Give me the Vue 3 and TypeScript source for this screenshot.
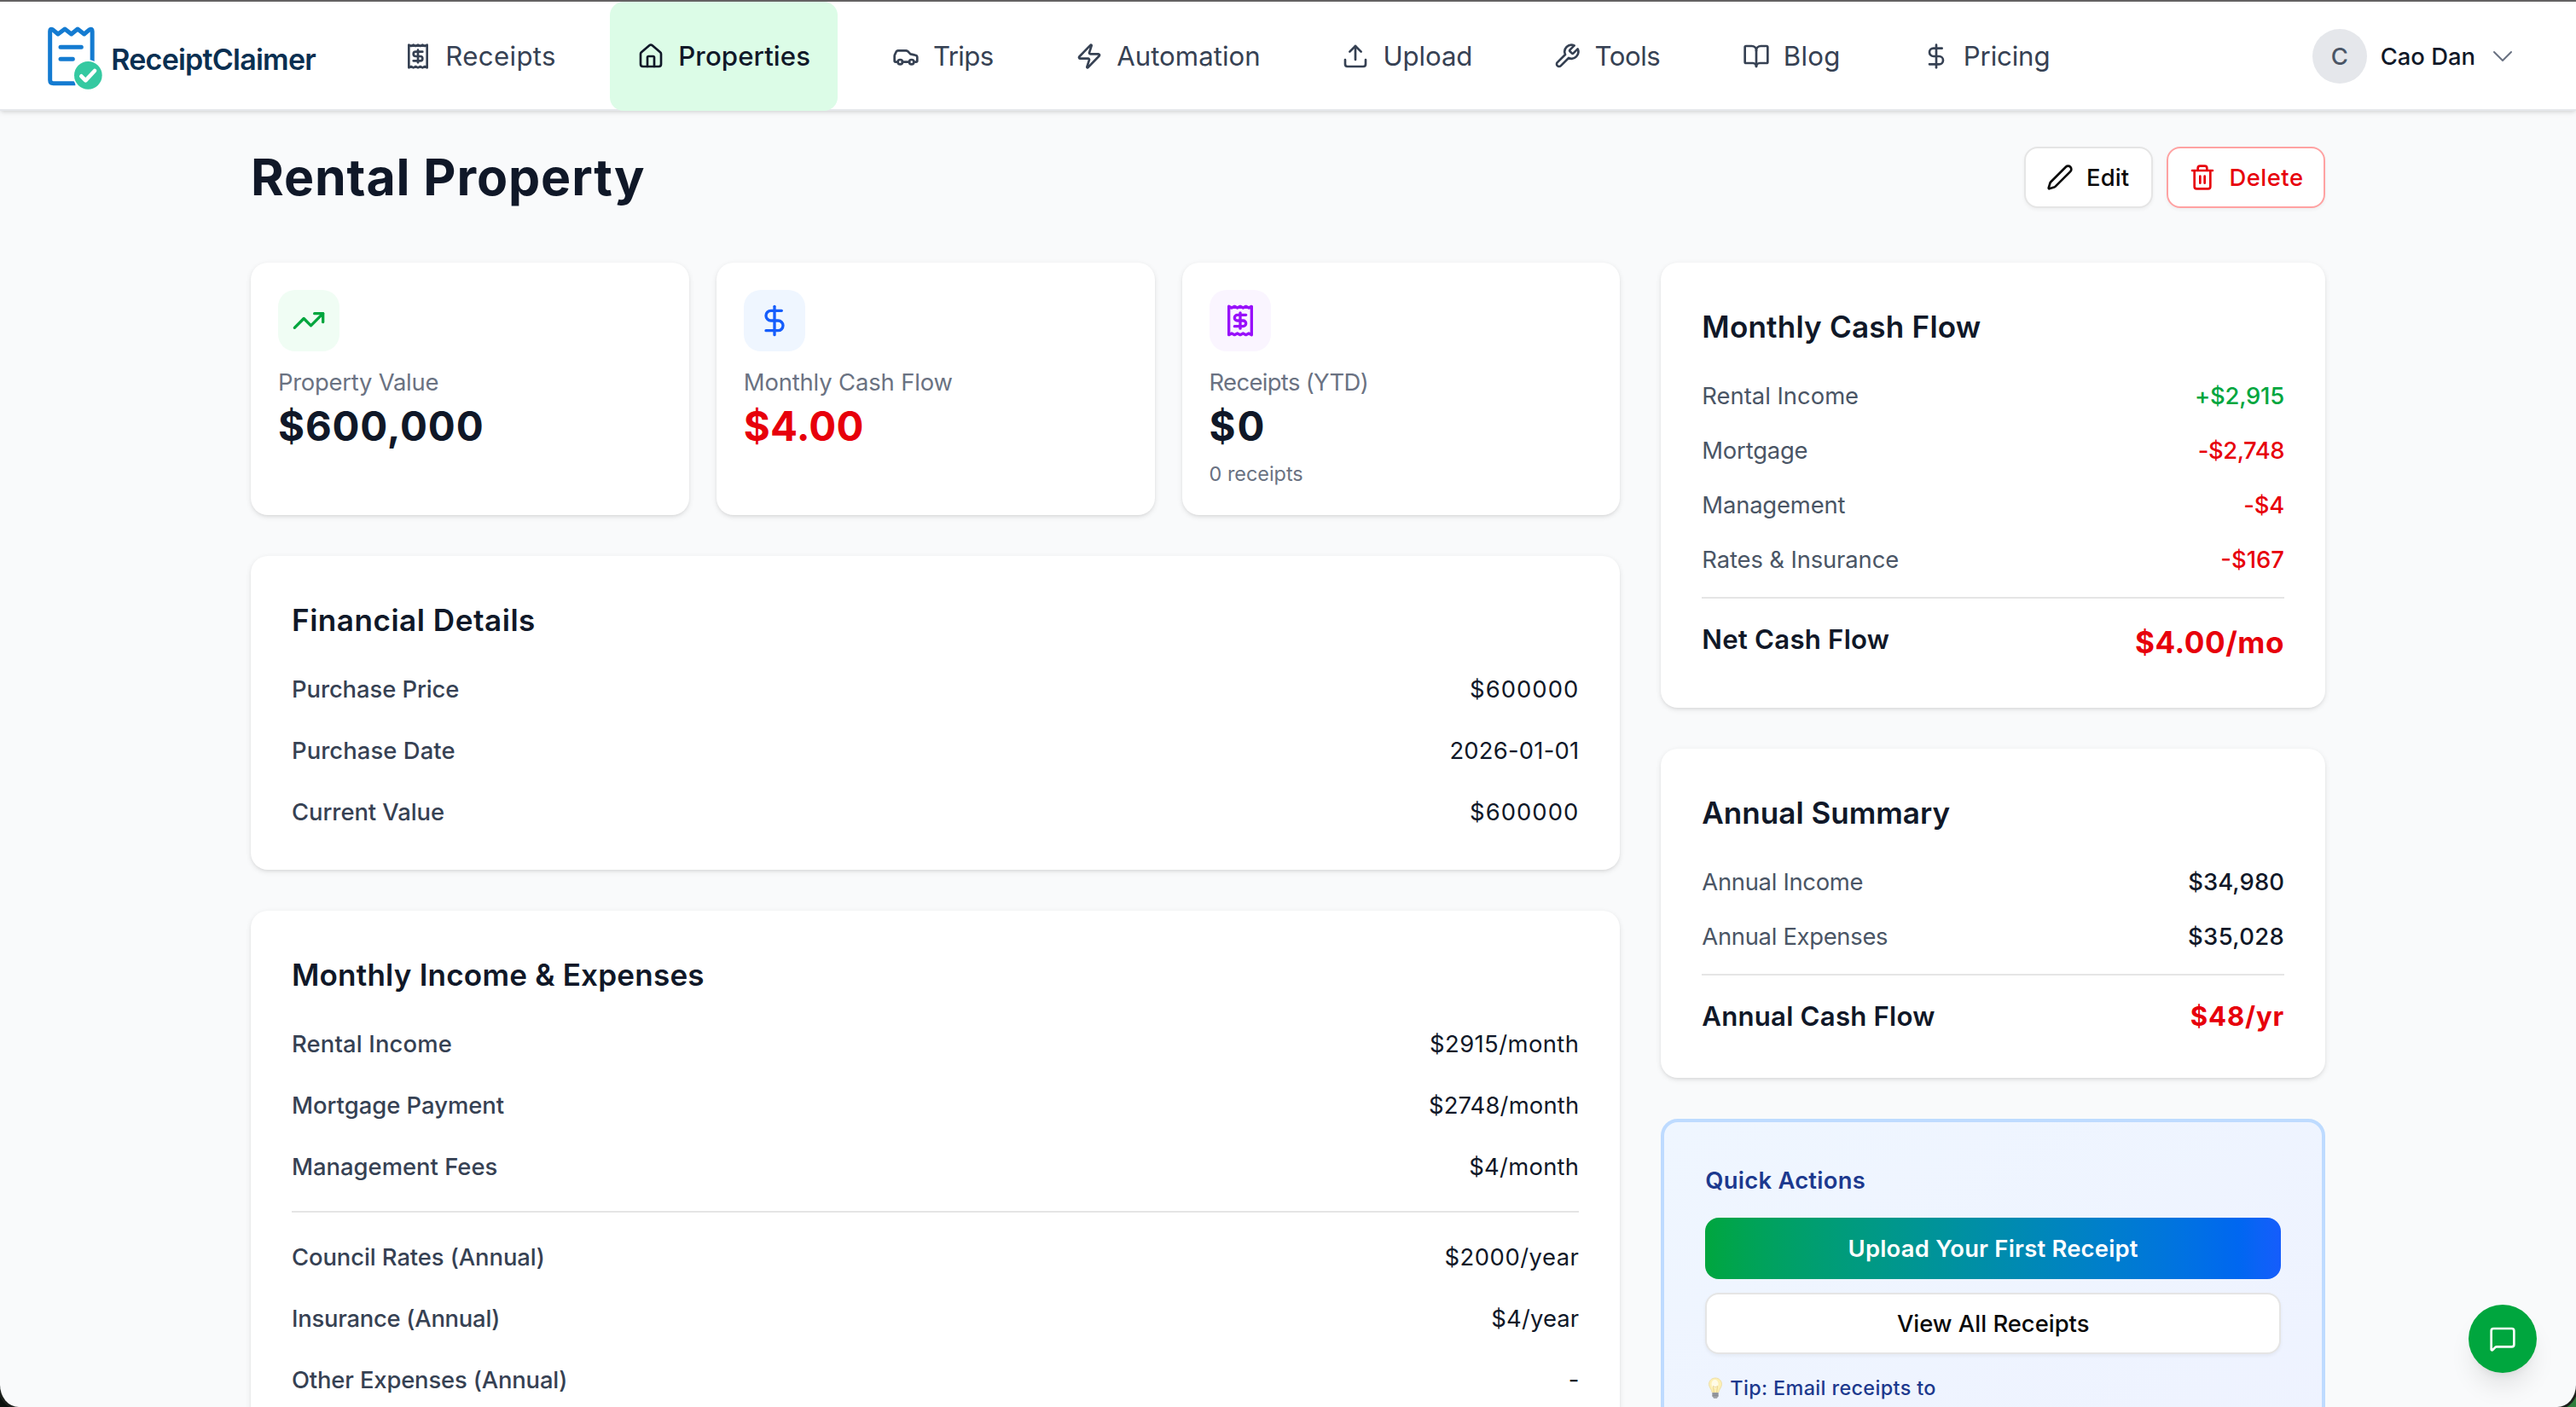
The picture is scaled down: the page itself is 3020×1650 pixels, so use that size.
<script setup lang="ts">
interface Txt { text: string; ls?: number }
interface Row { label: Txt; value: Txt; tone?: 'pos' | 'neg' }

const icons = {
  receipt: ['M4 2v20l2-1 2 1 2-1 2 1 2-1 2 1 2-1 2 1V2l-2 1-2-1-2 1-2-1-2 1-2-1-2 1Z', 'M16 8h-6a2 2 0 1 0 0 4h4a2 2 0 1 1 0 4H8', 'M12 17.5v-11'],
  house: ['M15 21v-8a1 1 0 0 0-1-1h-4a1 1 0 0 0-1 1v8', 'M3 10a2 2 0 0 1 .709-1.528l7-5.999a2 2 0 0 1 2.582 0l7 5.999A2 2 0 0 1 21 10v9a2 2 0 0 1-2 2H5a2 2 0 0 1-2-2z'],
  car: ['M19 17h2c.6 0 1-.4 1-1v-3c0-.9-.7-1.7-1.5-1.9C18.7 10.6 16 10 16 10s-1.3-1.4-2.2-2.3c-.5-.4-1.1-.7-1.8-.7H5c-.6 0-1.1.4-1.4.9l-1.4 2.9A3.7 3.7 0 0 0 2 12v4c0 .6.4 1 1 1h2', 'M9 17a2 2 0 1 1-4 0 2 2 0 0 1 4 0z', 'M9 17h6', 'M19 17a2 2 0 1 1-4 0 2 2 0 0 1 4 0z'],
  zap: ['M4 14a1 1 0 0 1-.78-1.63l9.9-10.2a.5.5 0 0 1 .86.46l-1.92 6.02A1 1 0 0 0 13 10h7a1 1 0 0 1 .78 1.63l-9.9 10.2a.5.5 0 0 1-.86-.46l1.92-6.02A1 1 0 0 0 11 14z'],
  upload: ['M12 3v12', 'm17 8-5-5-5 5', 'M21 15v4a2 2 0 0 1-2 2H5a2 2 0 0 1-2-2v-4'],
  wrench: ['M14.7 6.3a1 1 0 0 0 0 1.4l1.6 1.6a1 1 0 0 0 1.4 0l3.77-3.77a6 6 0 0 1-7.94 7.94l-6.91 6.91a2.12 2.12 0 0 1-3-3l6.91-6.91a6 6 0 0 1 7.94-7.94l-3.76 3.76z'],
  book: ['M12 7v14', 'M3 18a1 1 0 0 1-1-1V4a1 1 0 0 1 1-1h5a4 4 0 0 1 4 4 4 4 0 0 1 4-4h5a1 1 0 0 1 1 1v13a1 1 0 0 1-1 1h-6a3 3 0 0 0-3 3 3 3 0 0 0-3-3z'],
  dollar: ['M12 2v20', 'M17 5H9.5a3.5 3.5 0 0 0 0 7h5a3.5 3.5 0 0 1 0 7H6'],
  trend: ['M16 7h6v6', 'm22 7-8.5 8.5-5-5L2 17'],
}
type IconName = keyof typeof icons

const nav: { icon: IconName; text: string; width: number; ls: number; active?: boolean }[] = [
  { icon: 'receipt', text: 'Receipts', width: 129, ls: 0.35 },
  { icon: 'house', text: 'Properties', width: 154.6, ls: 0.06, active: true },
  { icon: 'car', text: 'Trips', width: 71.3, ls: -0.59 },
  { icon: 'zap', text: 'Automation', width: 168.3, ls: 0.02 },
  { icon: 'upload', text: 'Upload', width: 104, ls: -0.1 },
  { icon: 'wrench', text: 'Tools', width: 77.3, ls: -0.46 },
  { icon: 'book', text: 'Blog', width: 67, ls: 0.3 },
  { icon: 'dollar', text: 'Pricing', width: 101, ls: -0.15 },
]

const stats: { icon: IconName; color: string; label: Txt; value: Txt; sub?: Txt; red?: boolean }[] = [
  { icon: 'trend', color: 'green', label: { text: 'Property Value', ls: -0.24 }, value: { text: '$600,000', ls: 0.85 } },
  { icon: 'dollar', color: 'blue', label: { text: 'Monthly Cash Flow', ls: -0.13 }, value: { text: '$4.00', ls: 0.2 }, red: true },
  { icon: 'receipt', color: 'purple', label: { text: 'Receipts (YTD)', ls: -0.65 }, value: { text: '$0', ls: 1.8 }, sub: { text: '0 receipts' } },
]

const row = (l: string, lls: number, v: string, vls: number, tone?: 'pos' | 'neg'): Row => ({ label: { text: l, ls: lls }, value: { text: v, ls: vls }, tone })

const financial = [
  row('Purchase Price', -0.08, '$600000', 1.05),
  row('Purchase Date', 0.08, '2026-01-01', 0.22),
  row('Current Value', -0.05, '$600000', 1.05),
]
const monthly = [
  row('Rental Income', 0.16, '$2915/month', 0.42),
  row('Mortgage Payment', 0, '$2748/month', 0.18),
  row('Management Fees', 0, '$4/month', 0.28),
]
const annualCosts = [
  row('Council Rates (Annual)', -0.08, '$2000/year', 0.5),
  row('Insurance (Annual)', -0.25, '$4/year', 0.15),
  row('Other Expenses (Annual)', -0.15, '-', 0),
]
const cashFlow = [
  row('Rental Income', 0, '+$2,915', -0.2, 'pos'),
  row('Mortgage', -0.2, '-$2,748', -0.45, 'neg'),
  row('Management', -0.16, '-$4', -0.2, 'neg'),
  row('Rates & Insurance', -0.12, '-$167', 0, 'neg'),
]
const annual = [
  row('Annual Income', -0.3, '$34,980', 0.1),
  row('Annual Expenses', -0.3, '$35,028', 0.35),
]
const sp = (t: Txt) => ({ letterSpacing: (t.ls ?? 0) + 'px' })
</script>

<template>
  <div class="screen">
    <div class="page">
      <header class="topbar">
        <div class="brand">
          <svg class="brand-mark" viewBox="76 60 198 228" fill="none">
            <path d="M176 263H99Q87 263 87 251V80Q87 69 96 74L115 90 139 72 162 90 184 72 207 90 226 74Q235.500 69 235.500 80V200" stroke="#147bd1" stroke-width="15" stroke-linejoin="round" />
            <path d="M124 136H197M124 178H167" stroke="#147bd1" stroke-width="15" stroke-linecap="round" />
            <circle cx="221" cy="235" r="54" fill="#fff" />
            <circle cx="221" cy="235" r="49" fill="#35c9a1" />
            <path d="M197 238 212 253 244 219" stroke="#fff" stroke-width="14" stroke-linecap="round" stroke-linejoin="round" />
          </svg>
          <span class="brand-name">ReceiptClaimer</span>
        </div>
        <nav class="nav">
          <a v-for="n in nav" :key="n.text" class="nav-item" :class="{ active: n.active }">
            <svg class="icon" viewBox="0 0 24 24"><path v-for="d in icons[n.icon]" :key="d" :d="d" /></svg>
            <span class="nav-text" :style="{ width: n.width + 'px', letterSpacing: n.ls + 'px' }">{{ n.text }}</span>
          </a>
        </nav>
        <div class="user">
          <span class="avatar">C</span>
          <span class="user-name">Cao Dan</span>
          <svg class="icon chevron" viewBox="0 0 24 24"><path d="m19.500 8.250-7.500 7.500-7.500-7.500" /></svg>
        </div>
      </header>

      <main class="main">
        <div class="heading">
          <h1>Rental Property</h1>
          <div class="actions">
            <button class="btn edit">
              <svg class="icon" viewBox="0 0 24 24"><path d="M21.174 6.812a1 1 0 0 0-3.986-3.987L3.842 16.174a2 2 0 0 0-.5.83l-1.321 4.352a.5.5 0 0 0 .623.622l4.353-1.320a2 2 0 0 0 .83-.497z" /></svg>
              <span>Edit</span>
            </button>
            <button class="btn delete">
              <svg class="icon" viewBox="0 0 24 24"><path d="M10 11v6M14 11v6M19 6v14a2 2 0 0 1-2 2H7a2 2 0 0 1-2-2V6M3 6h18M8 6V4a2 2 0 0 1 2-2h4a2 2 0 0 1 2 2v2" /></svg>
              <span>Delete</span>
            </button>
          </div>
        </div>

        <div class="columns">
          <div class="left">
            <div class="stats">
              <section v-for="s in stats" :key="s.label.text" class="card stat">
                <div class="tile" :class="s.color">
                  <svg class="icon" viewBox="0 0 24 24"><path v-for="d in icons[s.icon]" :key="d" :d="d" /></svg>
                </div>
                <div class="stat-label" :style="sp(s.label)">{{ s.label.text }}</div>
                <div class="stat-value" :class="{ neg: s.red }" :style="sp(s.value)">{{ s.value.text }}</div>
                <div v-if="s.sub" class="stat-sub">{{ s.sub.text }}</div>
              </section>
            </div>

            <section class="card panel">
              <h2 class="loose">Financial Details</h2>
              <div class="rows wide">
                <div v-for="r in financial" :key="r.label.text" class="row">
                  <span :style="sp(r.label)">{{ r.label.text }}</span>
                  <span class="val" :style="sp(r.value)">{{ r.value.text }}</span>
                </div>
              </div>
            </section>

            <section class="card panel">
              <h2>Monthly Income &amp; Expenses</h2>
              <div class="rows wide">
                <div v-for="r in monthly" :key="r.label.text" class="row">
                  <span :style="sp(r.label)">{{ r.label.text }}</span>
                  <span class="val" :style="sp(r.value)">{{ r.value.text }}</span>
                </div>
                <div class="rows wide split">
                  <div v-for="r in annualCosts" :key="r.label.text" class="row">
                    <span :style="sp(r.label)">{{ r.label.text }}</span>
                    <span class="val" :style="sp(r.value)">{{ r.value.text }}</span>
                  </div>
                </div>
              </div>
            </section>
          </div>

          <aside class="right">
            <section class="card panel">
              <h2>Monthly Cash Flow</h2>
              <div class="rows tight">
                <div v-for="r in cashFlow" :key="r.label.text" class="row">
                  <span :style="sp(r.label)">{{ r.label.text }}</span>
                  <span class="val" :class="r.tone" :style="sp(r.value)">{{ r.value.text }}</span>
                </div>
                <div class="total">
                  <span class="total-label">Net Cash Flow</span>
                  <span class="total-value big">$4.00/mo</span>
                </div>
              </div>
            </section>

            <section class="card panel">
              <h2 class="snug">Annual Summary</h2>
              <div class="rows tight">
                <div v-for="r in annual" :key="r.label.text" class="row">
                  <span :style="sp(r.label)">{{ r.label.text }}</span>
                  <span class="val" :style="sp(r.value)">{{ r.value.text }}</span>
                </div>
                <div class="total">
                  <span class="total-label">Annual Cash Flow</span>
                  <span class="total-value">$48/yr</span>
                </div>
              </div>
            </section>

            <section class="quick">
              <h3>Quick Actions</h3>
              <button class="cta">Upload Your First Receipt</button>
              <button class="btn secondary">View All Receipts</button>
              <p class="tip">
                <svg class="bulb" viewBox="0 0 18 26">
                  <path d="M9 1C4.500 1 1.500 4.300 1.500 8.300c0 3.700 3 5.600 3.800 9.700h7.400c.8-4.100 3.800-6 3.800-9.700C16.500 4.300 13.500 1 9 1z" fill="#fdf0b4" stroke="#ead9a0" stroke-width=".8" />
                  <ellipse cx="8.500" cy="8" rx="4" ry="5" fill="#fffbe6" />
                  <path d="M7.300 18 6.500 10.500 9 12l2.500-1.500L10.700 18" fill="none" stroke="#e3c878" stroke-width=".7" />
                  <path d="M5.400 18h7.200v4.500L10.800 25H7.200l-1.800-2.500z" fill="#a3a6ab" />
                  <path d="M5.400 19.800h7.200M5.400 21.800h7.200" stroke="#74787f" stroke-width=".8" />
                </svg>
                <span>Tip: Email receipts to</span>
              </p>
            </section>
          </aside>
        </div>
      </main>

      <button class="chat">
        <svg class="icon" viewBox="0 0 24 24"><path d="M22 17a2 2 0 0 1-2 2H6.828a2 2 0 0 0-1.414.586l-2.202 2.202A.71.71 0 0 1 2 21.286V5a2 2 0 0 1 2-2h16a2 2 0 0 1 2 2z" /></svg>
      </button>
    </div>
  </div>
</template>

<style>
body { background: #16241a; }
</style>

<style scoped>
* { box-sizing: border-box; margin: 0; }
.screen {
  width: 3020px;
  height: 1650px;
  overflow: hidden;
  background: linear-gradient(to right, #0c120e 50%, #2f7d3c 50%);
  font-family: Inter, "Liberation Sans", sans-serif;
  color: #101828;
}
.page {
  position: relative;
  height: 1650px;
  overflow: hidden;
  background: #f9fafb;
  border-top: 2px solid #646263;
  border-radius: 0 0 22px 22px / 0 0 26px 26px;
  box-shadow: 0 0 0 3px #1b1f1b;
}
.icon {
  width: 32px;
  height: 32px;
  flex: none;
  fill: none;
  stroke: currentColor;
  stroke-width: 2;
  stroke-linecap: round;
  stroke-linejoin: round;
}
button { font-family: inherit; }

.topbar {
  display: flex;
  align-items: flex-start;
  height: 128px;
  padding: 0 70px 0 55.3px;
  background: #fff;
  border-bottom: 2px solid #e5e7eb;
  box-shadow: 0 2px 6px rgba(0, 0, 0, .1), 0 2px 4px -2px rgba(0, 0, 0, .1);
}
.brand { display: flex; align-items: center; width: 387px; padding-top: 28px; }
.brand-mark { width: 66px; height: 76px; }
.brand-name {
  padding: 3px 0 0 9px;
  font-size: 34px;
  font-weight: 600;
  line-height: 40px;
  letter-spacing: -.77px;
  color: #0a2f51;
}
.nav { display: flex; gap: 32px; }
.nav-item {
  display: flex;
  align-items: center;
  gap: 16px;
  height: 128px;
  padding: 0 32px;
  border-radius: 16px;
  color: #364153;
  font-size: 31.2px;
}
.nav-text { white-space: nowrap; }
.nav-item.active { background: #dcfce7; color: #101828; font-weight: 500; }
.user {
  display: flex;
  align-items: center;
  gap: 16px;
  height: 128px;
  margin-left: auto;
  font-size: 27.4px;
  font-weight: 500;
}
.avatar {
  display: flex;
  align-items: center;
  justify-content: center;
  width: 64px;
  height: 64px;
  border-radius: 50%;
  background: #e5e7eb;
  color: #4a5565;
}
.chevron { stroke-width: 1.5; color: #6a7282; }

.main { width: 2432px; margin: 0 auto; padding-top: 42px; }
.heading { display: flex; justify-content: space-between; height: 72px; }
h1 { font-size: 59px; font-weight: 700; line-height: 72px; letter-spacing: .9px; }
.actions { display: flex; gap: 16px; }
.btn {
  display: flex;
  align-items: center;
  gap: 16px;
  height: 72px;
  padding: 0 24px;
  border: 2px solid #e5e5e5;
  border-radius: 16px;
  background: #fff;
  color: #0a0a0a;
  font-size: 27.4px;
  font-weight: 500;
  box-shadow: 0 2px 4px rgba(0, 0, 0, .05);
}
.edit { width: 151px; gap: 15px; letter-spacing: .15px; }
.delete { width: 186px; gap: 15.5px; border-color: #ffa2a2; color: #e7000b; letter-spacing: .5px; }

.columns { display: grid; grid-template-columns: repeat(3, 1fr); gap: 48px; margin-top: 64px; }
.left { grid-column: span 2; display: flex; flex-direction: column; gap: 48px; }
.right { display: flex; flex-direction: column; gap: 48px; }
.stats { display: grid; grid-template-columns: repeat(3, 1fr); gap: 32px; }
.card {
  background: #fff;
  border-radius: 20px;
  box-shadow: 0 2px 6px rgba(0, 0, 0, .1), 0 2px 4px -2px rgba(0, 0, 0, .1);
}
.stat { height: 296px; padding: 32px; }
.tile {
  display: flex;
  align-items: center;
  justify-content: center;
  width: 72px;
  height: 72px;
  margin-bottom: 16px;
  border-radius: 20px;
}
.tile .icon { width: 40px; height: 40px; }
.tile.green { background: #f0fdf4; color: #00a63e; }
.tile.blue { background: #eff6ff; color: #155dfc; }
.tile.purple { background: #faf5ff; color: #9810fa; }
.stat-label { font-size: 27.4px; line-height: 40px; color: #6a7282; }
.stat-value { font-size: 47.4px; font-weight: 700; line-height: 64px; }
.stat-sub { margin-top: 8px; font-size: 23.4px; line-height: 32px; color: #6a7282; }
.panel { padding: 48px; }
h2 { font-size: 35.1px; font-weight: 600; line-height: 54px; margin-bottom: 34px; letter-spacing: .2px; }
h2.loose { letter-spacing: .52px; }
h2.snug { letter-spacing: 0; }
.rows { display: flex; flex-direction: column; }
.wide { gap: 32px; }
.tight { gap: 24px; }
.row { display: flex; justify-content: space-between; font-size: 27.4px; line-height: 40px; white-space: nowrap; }
.wide .row { font-weight: 450; color: #364153; }
.wide .val { font-weight: 400; color: #101828; }
.tight .row { color: #4a5565; }
.tight .val { font-weight: 500; color: #101828; }
.split { padding-top: 32px; border-top: 2px solid #e5e5e5; }
.total {
  display: flex;
  justify-content: space-between;
  padding-top: 24px;
  border-top: 2px solid #e5e5e5;
  font-size: 31.2px;
  line-height: 48px;
}
.total-label { font-weight: 600; letter-spacing: .2px; }
.total-value { font-weight: 700; letter-spacing: .8px; color: #e7000b; }
.total-value.big { font-size: 35.1px; line-height: 54px; margin-bottom: 2px; letter-spacing: .55px; }
.tight .val.pos { color: #00a63e; }
.tight .val.neg, .stat-value.neg { color: #e7000b; }

.quick {
  height: 480px;
  padding: 48px;
  border: 4px solid #bedbff;
  border-radius: 20px;
  background: linear-gradient(to bottom right, #eff6ff, #eef2ff);
  color: #1c398e;
}
h3 { font-size: 27.4px; font-weight: 600; line-height: 40px; letter-spacing: .25px; margin-bottom: 24px; }
.cta {
  display: block;
  width: 100%;
  height: 72px;
  margin-bottom: 16px;
  border: 0;
  border-radius: 16px;
  background: linear-gradient(to right in oklab, #00a63e, #155dfc);
  color: #fff;
  font-size: 27.4px;
  font-weight: 600;
  letter-spacing: .22px;
}
.secondary { width: 100%; justify-content: center; }
.tip { display: flex; align-items: center; gap: 8px; margin-top: 24px; padding-left: 3px; font-size: 23.4px; font-weight: 500; line-height: 32px; letter-spacing: .36px; }
.bulb { width: 18px; height: 26px; }

.chat {
  position: absolute;
  right: 46px;
  bottom: 40px;
  display: flex;
  align-items: center;
  justify-content: center;
  width: 80px;
  height: 80px;
  padding: 0;
  border: 0;
  border-radius: 50%;
  background: #00a63e;
  color: #fff;
  box-shadow: 0 20px 30px -6px rgba(0, 0, 0, .1), 0 8px 12px -8px rgba(0, 0, 0, .1);
}
</style>
